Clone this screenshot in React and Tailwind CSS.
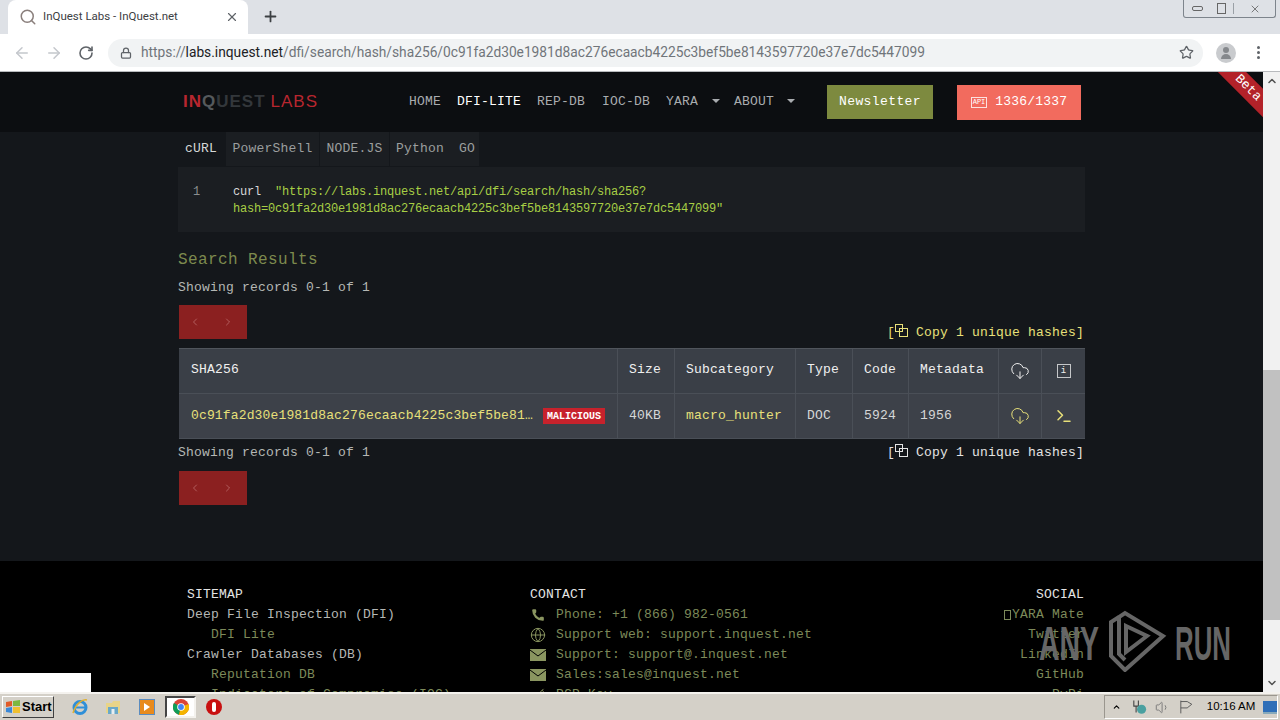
import { ArrowLeft, ArrowRight, RotateCw, Star, Lock, X, Plus, Search, CloudDownload, Terminal, Phone, Globe, Key, ChevronLeft, ChevronRight, ChevronUp, Volume1 } from "lucide-react";

const CopyIcon = ({ className }) => (
	<svg viewBox="0 0 14 14" width="14" height="14" fill="none" stroke="currentColor" strokeWidth="1" className={className}>
		<rect x="1.5" y="0.5" width="7" height="7" />
		<rect x="5.5" y="4.5" width="8" height="8" />
	</svg>
);

const MailIcon = () => (
	<svg viewBox="0 0 16 12" width="16" height="12" className="mr-[10px]">
		<rect width="16" height="12" fill="#8a9560" />
		<path d="M0 1 L8 7 L16 1" fill="none" stroke="#000" strokeWidth="1" />
	</svg>
);

const Pager = () => (
	<div className={styles.pager}>
		<ChevronLeft size={12} strokeWidth={1} />
		<ChevronRight size={12} strokeWidth={1} />
	</div>
);

const Caret = () => <span className="mb-[3px] w-0 h-0 border-x-[4px] border-x-transparent border-t-[4px] border-t-[#a9acb0]" />;

const ChromeIcon = () => (
	<svg viewBox="0 0 16 16" width="16" height="16">
		<circle cx="8" cy="8" r="8" fill="#db4437" />
		<path d="M8 8 L1 4 A8 8 0 0 0 6 15.8 Z" fill="#0f9d58" />
		<path d="M8 8 L15.5 5 A8 8 0 0 1 6 15.8 Z" fill="#f4b400" />
		<circle cx="8" cy="8" r="3.8" fill="#fff" />
		<circle cx="8" cy="8" r="2.9" fill="#4285f4" />
	</svg>
);

const taskIcons = (
	<>
		<svg viewBox="0 0 18 18" width="18" height="18" className="ml-[17px]">
			<circle cx="9" cy="9.5" r="6" fill="none" stroke="#2f8fd8" strokeWidth="3" />
			<rect x="4" y="8.5" width="10" height="2" fill="#2f8fd8" />
			<path d="M2 15 C5 5 12 1 16 2" stroke="#e0b030" strokeWidth="1.5" fill="none" />
		</svg>
		<svg viewBox="0 0 16 16" width="16" height="16" className="ml-[16px]">
			<path d="M1 4 H7 L8 2 H15 V14 H1 Z" fill="#e8d488" />
			<rect x="3" y="8" width="10" height="7" fill="#6aa8c8" />
			<rect x="6.5" y="10" width="3" height="5" fill="#e8eef0" />
		</svg>
		<div className="ml-[18px] w-[16px] h-[16px] bg-[#e88a1c] border border-[#5a8cc0] flex items-center justify-center">
			<span className="w-0 h-0 border-y-[4px] border-y-transparent border-l-[6px] border-l-white" />
		</div>
		<div className="ml-[10px] w-[31px] h-[22px] bg-white border-2 border-t-[#444] border-l-[#444] border-r-[#f4f2ee] border-b-[#f4f2ee] flex items-center justify-center">
			<ChromeIcon />
		</div>
		<div className="ml-[10px] w-[16px] h-[16px] rounded-full bg-[#c81010] flex items-center justify-center">
			<span className="w-[4px] h-[10px] rounded-full bg-white" />
		</div>
	</>
);

const App = () => {
	return (
		<div className="w-[1280px] h-[720px] overflow-hidden flex flex-col relative bg-black font-['Liberation_Mono',monospace]">
			{/* chrome tabs */}
			<div className="h-[34px] shrink-0 bg-[#dee1e6] flex items-end pl-[8px] relative font-['Liberation_Sans',sans-serif]">
				<div className="w-[240px] h-[34px] bg-white rounded-t-[8px] flex items-center pl-[11px] pr-[9px]">
					<Search size={18} strokeWidth={2} className="text-[#8a7f7c] shrink-0" />
					<span className="ml-[6px] text-[11.5px] text-[#3c4043] font-['Roboto',sans-serif] whitespace-nowrap">InQuest Labs - InQuest.net</span>
					<X size={14} strokeWidth={2} className="ml-auto text-[#5f6368]" />
				</div>
				<Plus size={17} strokeWidth={2.5} className="ml-[14px] mb-[9px] text-[#3c4043]" />
				{/* window buttons */}
				<div className="absolute top-0 right-[4px] w-[93px] h-[18px] border border-t-0 border-[#7d848c] rounded-b-[3px] flex items-center text-[#555] bg-[#dee1e6]">
					<div className="w-[26px] flex justify-center"><span className="w-[11px] h-[5px] border border-[#666] rounded-[2px]" /></div>
					<div className="w-[24px] flex justify-center border-r border-[#9aa0a6]"><span className="w-[9px] h-[11px] border border-[#666]" /></div>
					<div className="flex-1 flex justify-center"><X size={12} strokeWidth={1.5} /></div>
				</div>
			</div>
			{/* chrome toolbar */}
			<div className="h-[38px] shrink-0 bg-white border-b border-[#b8babd] flex items-center pl-[13px]">
				<ArrowLeft size={18} strokeWidth={2} className="text-[#c4c7cc]" />
				<ArrowRight size={18} strokeWidth={2} className="ml-[14px] text-[#c4c7cc]" />
				<RotateCw size={16} strokeWidth={2.4} className="ml-[15px] text-[#5f6368]" />
				<div className="ml-[14px] w-[1095px] h-[28px] bg-[#f1f3f4] rounded-full flex items-center pl-[12px] pr-[9px] font-['Roboto',sans-serif] text-[13.75px]">
					<Lock size={12} strokeWidth={2.5} className="text-[#5f6368]" />
					<span className="ml-[9px] whitespace-nowrap text-[#70757a]">https://<span className="text-[#202124]">labs.inquest.net</span>/dfi/search/hash/sha256/0c91fa2d30e1981d8ac276ecaacb4225c3bef5be8143597720e37e7dc5447099</span>
					<Star size={15} strokeWidth={2} className="ml-auto text-[#5f6368]" />
				</div>
				<div className="ml-[13px] w-[20px] h-[20px] rounded-full bg-[#c9cbce] flex flex-col items-center justify-center">
					<span className="w-[6px] h-[6px] rounded-full bg-[#85888c]" />
					<span className="w-[10px] h-[5px] mt-[1px] rounded-t-full bg-[#85888c]" />
				</div>
				<div className="ml-[21px] flex flex-col gap-[2px]">
					<span className="w-[3px] h-[3px] rounded-full bg-[#5f6368]" />
					<span className="w-[3px] h-[3px] rounded-full bg-[#5f6368]" />
					<span className="w-[3px] h-[3px] rounded-full bg-[#5f6368]" />
				</div>
			</div>

			{/* viewport */}
			<div className="h-[620px] shrink-0 flex overflow-hidden relative">
				<div className="w-[1263px] shrink-0 h-[620px] overflow-hidden flex flex-col bg-[#14171b]">
					{/* navbar */}
					<div className="h-[60px] shrink-0 bg-[#0c0e11] flex items-center pl-[183px] relative overflow-hidden">
						<div className="w-[226px] flex items-center font-['Liberation_Sans',sans-serif] text-[17px] font-bold tracking-[1px] text-[#b8262f]">
							<span>IN</span>
							<span className="text-[#55595c]">Q</span>
							<span className="text-[#33373b]">UEST</span>
							<span className="ml-[5px] font-normal">LABS</span>
						</div>
						<nav className={styles.nav}>
							<span className="w-[48px]">HOME</span>
							<span className="w-[80px] text-white">DFI-LITE</span>
							<span className="w-[65px]">REP-DB</span>
							<span className="w-[64px]">IOC-DB</span>
							<span className="w-[68px] flex items-center gap-[14px]">YARA<Caret /></span>
							<span className="w-[61px] flex items-center gap-[13px]">ABOUT<Caret /></span>
						</nav>
						<div className="ml-[32px] w-[106px] h-[34px] bg-[#7d8a3f] text-white flex items-center justify-center text-[13px] tracking-[0.4px]">Newsletter</div>
						<div className="ml-[24px] w-[124px] h-[35px] bg-[#f26b5e] text-white flex items-center justify-center text-[13px] tracking-[0.2px]">
							<span className="border border-white/80 text-[7px] leading-[9px] px-[1px] mr-[8px] tracking-normal">API</span>
							1336/1337
						</div>
						<div className="absolute top-[6px] right-[-29px] w-[88px] h-[20px] bg-[#b32229] rotate-45 text-white text-[13px] flex items-center justify-center">Beta</div>
					</div>

					{/* main */}
					<div className="shrink-0 h-[429px] pl-[178px] w-[908px] box-content">
						<div className="w-[907px] flex flex-col">
							<div className="flex h-[34px] text-[13px] tracking-[0.2px] text-[#9b9e9f] items-center">
								<span className="w-[48px] h-full flex items-center pl-[7px] text-[#d5d7d8] bg-[#14171b]">cURL</span>
								<div className="flex h-full bg-[#1b1e22]">
									<span className="w-[94px] flex items-center justify-center border-r border-[#14171b]">PowerShell</span>
									<span className="w-[70px] flex items-center justify-center border-r border-[#14171b]">NODE.JS</span>
									<span className="w-[63px] flex items-center pl-[6px]">Python</span>
									<span className="w-[26px] flex items-center pl-[6px]">GO</span>
								</div>
							</div>
							<div className="mt-[1px] h-[65px] bg-[#1b1e22] flex pt-[17px] text-[12px] leading-[17px] tracking-[-0.2px]">
								<span className="w-[55px] pl-[15px] text-[#8b8e90]">1</span>
								<div className="text-[#a8cf45] whitespace-pre">
									<span className="text-[#d5d7d8]">curl</span>{'  "https://labs.inquest.net/api/dfi/search/hash/sha256?\nhash=0c91fa2d30e1981d8ac276ecaacb4225c3bef5be8143597720e37e7dc5447099"'}
								</div>
							</div>
							<h2 className="mt-[18px] h-[20px] leading-[20px] text-[16px] tracking-[0.4px] text-[#7d8a4e]">Search Results</h2>
							<p className={`${styles.records} mt-[9px]`}>Showing records 0-1 of 1</p>
							<div className="mt-[9px] flex items-end justify-between">
								<Pager />
								<span className={`${styles.copy} text-[#e8e07a] mb-[-3px]`}>[<CopyIcon className="ml-[-1px] mr-[8px] mb-[3px]" />Copy 1 unique hashes]</span>
							</div>

							{/* results table */}
							<div className="mt-[9px] ml-[1px] border-t border-[#50555c] bg-[#3a3f47] text-[13px] tracking-[0.2px]">
								<div className={`${styles.row} h-[44px] text-[#f0f0f0]`}>
									<div className={`${styles.cell} pl-[12px] pb-[2px]`}>SHA256</div>
									<div className={`${styles.cell} pb-[2px]`}>Size</div>
									<div className={`${styles.cell} pb-[2px]`}>Subcategory</div>
									<div className={`${styles.cell} pb-[2px]`}>Type</div>
									<div className={`${styles.cell} pb-[2px]`}>Code</div>
									<div className={`${styles.cell} pb-[2px]`}>Metadata</div>
									<div className={styles.icon_cell}><CloudDownload size={20} strokeWidth={1.2} /></div>
									<div className={`${styles.icon_cell} border-r-0`}>
										<span className="w-[14px] h-[14px] border border-[#c5c7c9] text-[9px] leading-[12px] text-center">i</span>
									</div>
								</div>
								<div className={`${styles.row} h-[46px] border-t border-[#4a4f57] border-b border-b-[#4a4f57] bg-[#3d4149] text-[#d5d7d8]`}>
									<div className={`${styles.cell} pl-[12px] justify-between pr-[12px]`}>
										<span className="text-[#e8e07a] whitespace-nowrap tracking-[0.15px]">0c91fa2d30e1981d8ac276ecaacb4225c3bef5be81…</span>
										<span className="h-[16px] px-[4px] bg-[#c7222c] text-white font-bold text-[10px] tracking-[0px] flex items-center">MALICIOUS</span>
									</div>
									<div className={styles.cell}>40KB</div>
									<div className={`${styles.cell} text-[#e8e07a]`}>macro_hunter</div>
									<div className={styles.cell}>DOC</div>
									<div className={styles.cell}>5924</div>
									<div className={styles.cell}>1956</div>
									<div className={`${styles.icon_cell} text-[#e8e07a]`}><CloudDownload size={20} strokeWidth={1.2} /></div>
									<div className={`${styles.icon_cell} border-r-0 text-[#e8e07a]`}><Terminal size={18} strokeWidth={2} /></div>
								</div>
							</div>

							<div className="mt-[4px] flex items-center justify-between">
								<p className={styles.records}>Showing records 0-1 of 1</p>
								<span className={`${styles.copy} text-[#e4e4e4]`}>[<CopyIcon className="ml-[-1px] mr-[8px] mb-[3px]" />Copy 1 unique hashes]</span>
							</div>
							<div className="mt-[8px]"><Pager /></div>
						</div>
					</div>

					{/* footer */}
					<div className="flex-1 min-h-0 bg-black pt-[24px] pl-[187px] pr-[179px] flex text-[13px] leading-[20px] tracking-[0.2px] text-[#b5b7b5]">
						<div className="w-[343px] shrink-0 whitespace-nowrap">
							<p className={styles.foot_h}>SITEMAP</p>
							<p>Deep File Inspection (DFI)</p>
							<p className={styles.foot_sub}>DFI Lite</p>
							<p>Crawler Databases (DB)</p>
							<p className={styles.foot_sub}>Reputation DB</p>
							<p className={styles.foot_sub}>Indicators of Compromise (IOC)</p>
						</div>
						<div className="flex-1 whitespace-nowrap">
							<p className={styles.foot_h}>CONTACT</p>
							<p className={styles.foot_contact}><Phone size={14} fill="currentColor" strokeWidth={0} className={styles.foot_icon} />Phone: +1 (866) 982-0561</p>
							<p className={styles.foot_contact}><Globe size={16} strokeWidth={1.5} className={styles.foot_icon} />Support web: support.inquest.net</p>
							<p className={styles.foot_contact}><MailIcon />Support: support@.inquest.net</p>
							<p className={styles.foot_contact}><MailIcon />Sales:sales@inquest.net</p>
							<p className={styles.foot_contact}><Key size={14} strokeWidth={1.5} className={styles.foot_icon} />PGP Key</p>
						</div>
						<div className="text-right whitespace-nowrap text-[#7d8a5a]">
							<p className={styles.foot_h}>SOCIAL</p>
							<p className="flex items-center justify-end"><span className="w-[7px] h-[10px] mr-[1px] border border-[#7d8a5a]" />YARA Mate</p>
							<p>Twitter</p>
							<p>LinkedIn</p>
							<p>GitHub</p>
							<p>PyPi</p>
						</div>
					</div>
				</div>

				{/* scrollbar */}
				<div className="w-[17px] shrink-0 bg-[#f1f1f1] flex flex-col items-center justify-between relative">
					<ChevronUp size={12} strokeWidth={3} className="mt-[3px] text-[#505050]" />
					<div className="absolute top-[298px] left-0 w-[17px] h-[250px] bg-[#c1c1c1]" />
					<ChevronUp size={12} strokeWidth={3} className="mb-[3px] rotate-180 text-[#505050]" />
				</div>

				{/* white leftover over the footer */}
				<div className="absolute left-0 bottom-0 w-[91px] h-[19px] bg-white" />

				{/* any.run watermark */}
				<svg viewBox="0 0 192 62" width="192" height="62" className="absolute left-[1039px] top-[538px]">
					<text x="0" y="50" fontFamily="'Liberation Sans', sans-serif" fontSize="48" fontWeight="bold" fill="#666" textLength="60" lengthAdjust="spacingAndGlyphs">ANY</text>
					<text x="136" y="50" fontFamily="'Liberation Sans', sans-serif" fontSize="48" fontWeight="bold" fill="#666" textLength="56" lengthAdjust="spacingAndGlyphs">RUN</text>
					<path d="M80 7 L72 12 V46 L86 60 L124 26 L86 3 L80 7 V44 L86 50 M87 16 L108 26 L87 42 Z" fill="none" stroke="#666" strokeWidth="4" />
				</svg>
			</div>

			{/* windows taskbar */}
			<div className="flex-1 bg-[#d4d0c8] border-t-2 border-t-[#f4f2ee] flex items-center font-['Liberation_Sans',sans-serif]">
				<div className="ml-[2px] w-[52px] h-[22px] bg-[#d4d0c8] border border-t-white border-l-white border-r-[#404040] border-b-[#404040] flex items-center pl-[2px]">
					<svg viewBox="0 0 16 16" width="16" height="16">
						<path d="M1 3 L7 2 V7 L1 8 Z" fill="#e05a28" />
						<path d="M8 2 L15 1 V7 L8 7 Z" fill="#7cb840" />
						<path d="M1 9 L7 8 V14 L1 13 Z" fill="#3a88d8" />
						<path d="M8 8 L15 8 V14 L8 14 Z" fill="#f0c030" />
					</svg>
					<span className="ml-[1px] text-[13px] font-bold text-black">Start</span>
				</div>
				{taskIcons}
				<div className="ml-auto mr-[2px] w-[174px] h-[24px] border border-[#9a968e] border-r-white border-b-white flex items-center text-[11.5px] text-black">
					<ChevronUp size={10} strokeWidth={3} className="ml-[7px]" />
					<svg viewBox="0 0 16 16" width="16" height="16" className="ml-[11px]">
						<path d="M2 1 V7 H7 V1 M4.5 7 V14" fill="none" stroke="#444" strokeWidth="1.2" />
						<circle cx="10.5" cy="10.5" r="5" fill="#4aa0a0" />
					</svg>
					<Volume1 size={17} strokeWidth={1.5} className="ml-[8px] text-[#7a7a7a]" />
					<svg viewBox="0 0 16 16" width="16" height="16" className="ml-[9px]" fill="none" stroke="#555"><path d="M2 1 V15 M2 2 H9 L14 5 L9 9 H2" /></svg>
					<span className="ml-[13px] whitespace-nowrap">10:16 AM</span>
					<span className="ml-[8px] w-[15px] h-[13px] bg-[#2f6fb8] border-b-2 border-[#8ab]" />
				</div>
			</div>
		</div>
	);
};

const styles = {
	nav: "w-[386px] flex items-center text-[13px] tracking-[0.2px] text-[#a9acb0]",
	pager: "ml-[1px] w-[68px] h-[34px] bg-[#8b2020] text-[#d89a9a] flex items-center justify-between pl-[10px] pr-[13px]",
	records: "h-[17px] leading-[17px] text-[13px] tracking-[0.2px] text-[#b5b7b5]",
	copy: "mr-[1px] flex items-center text-[13px] tracking-[0.2px] whitespace-pre",
	row: "grid grid-cols-[439px_57px_121px_57px_56px_90px_43px_43px]",
	cell: "flex items-center pl-[11px] border-r border-[#4a4f57] overflow-hidden",
	icon_cell: "flex items-center justify-center border-r border-[#4a4f57]",
	foot_h: "text-[#e4e4e4]",
	foot_sub: "pl-[24px] text-[#7d8a5a]",
	foot_contact: "flex items-center text-[#7d8a5a]",
	foot_icon: "w-[16px] mr-[10px] text-[#8a9560]",
};

export default App;
